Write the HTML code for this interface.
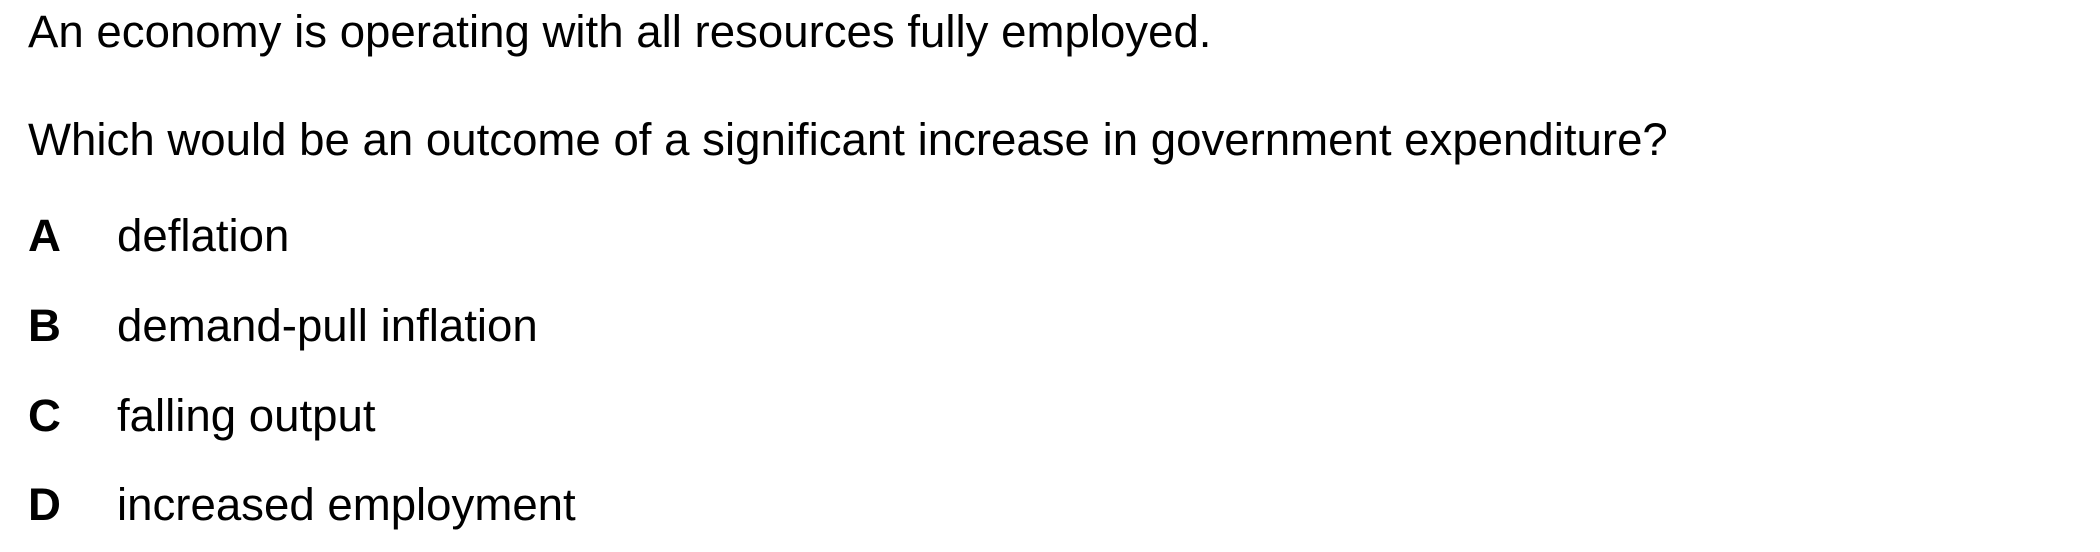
<!DOCTYPE html>
<html><head><style>
body{margin:0;width:2100px;height:552px;background:#fff;position:relative;overflow:hidden;font-family:"Liberation Sans",Arial,sans-serif;font-size:45.6px;color:#000}
.l{position:absolute;left:28px;line-height:1;white-space:nowrap}
.k{position:absolute;left:28px;font-weight:bold;line-height:1}
.t{position:absolute;left:117px;line-height:1;white-space:nowrap}
</style></head><body>
<div class="l" style="top:9px">An economy is operating with all resources fully employed.</div>
<div class="l" style="top:117px">Which would be an outcome of a significant increase in government expenditure?</div>
<div class="k" style="top:213px">A</div><div class="t" style="top:213px">deflation</div>
<div class="k" style="top:303px">B</div><div class="t" style="top:303px">demand-pull inflation</div>
<div class="k" style="top:393px">C</div><div class="t" style="top:393px">falling output</div>
<div class="k" style="top:482px">D</div><div class="t" style="top:482px">increased employment</div>
</body></html>
